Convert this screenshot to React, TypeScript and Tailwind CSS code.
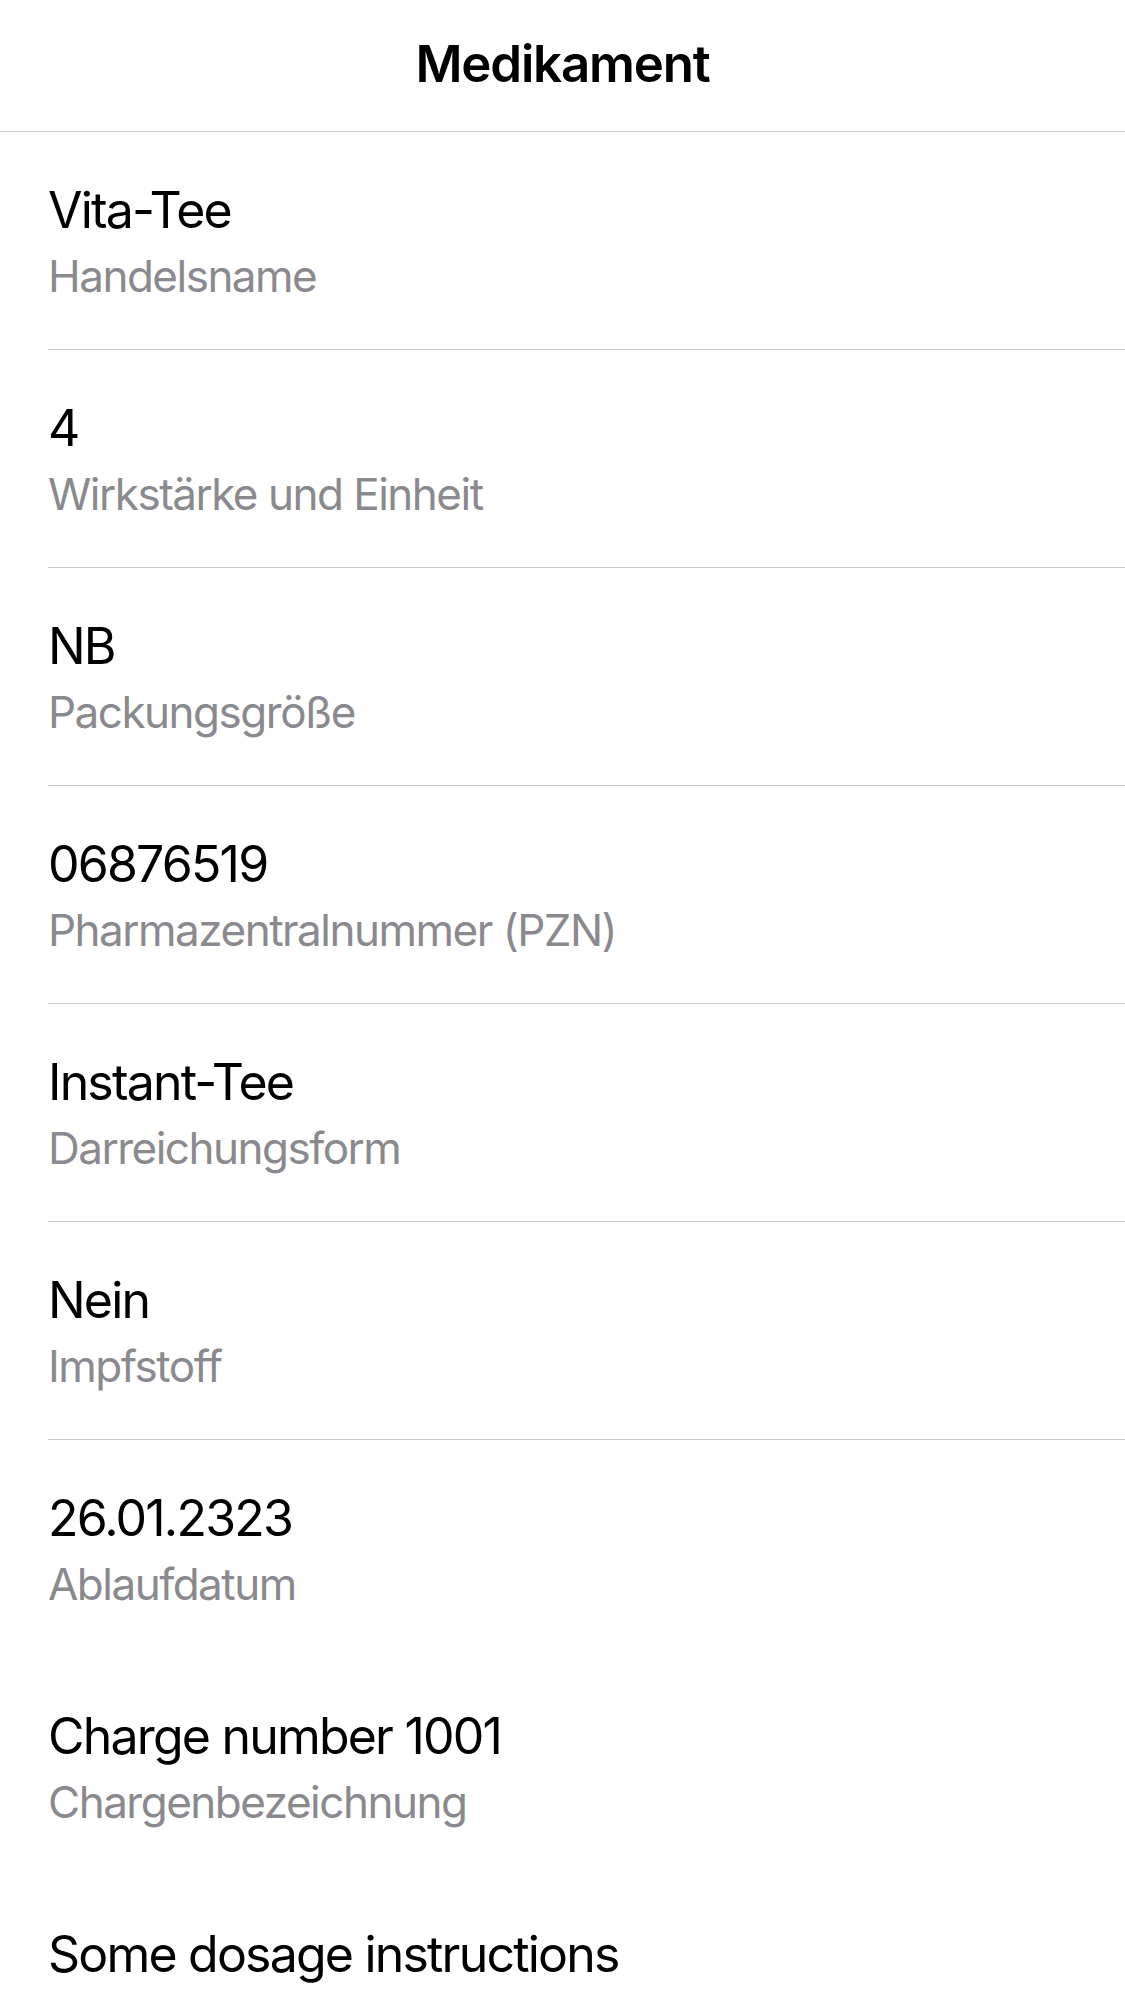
const rows = [
  { value: 'Vita-Tee', label: 'Handelsname', divider: true },
  { value: '4', label: 'Wirkstärke und Einheit', divider: true },
  { value: 'NB', label: 'Packungsgröße', divider: true },
  { value: '06876519', label: 'Pharmazentralnummer (PZN)', divider: true },
  { value: 'Instant-Tee', label: 'Darreichungsform', divider: true },
  { value: 'Nein', label: 'Impfstoff', divider: true },
  { value: '26.01.2323', label: 'Ablaufdatum', divider: false },
  { value: 'Charge number 1001', label: 'Chargenbezeichnung', divider: false },
  { value: 'Some dosage instructions', label: 'Dosierungsanweisung', divider: false },
];

const App = () => {
  return (
    <div
      className="w-[1125px] h-[2001px] overflow-hidden bg-white"
      style={{ fontFamily: 'Inter, "Noto Sans", sans-serif' }}
    >
      {/* Nav bar */}
      <header className="h-[132px] flex items-center justify-center border-b border-[#c8c8cc]">
        <h1 className="text-[51px] font-semibold text-black tracking-[-1.2px] pb-[2px]">Medikament</h1>
      </header>

      {/* List */}
      <div className="pl-[48px]">
        {rows.map((row) => (
          <div
            key={row.label}
            className={`h-[218px] pt-[45px] flex flex-col ${row.divider ? 'border-b border-[#c8c8cc]' : ''}`}
          >
            <div className="text-[50px] leading-[66px] text-black tracking-[-1.8px]">{row.value}</div>
            <div className="text-[44px] leading-[66px] text-[#8a8a8e] tracking-[-1.5px]">{row.label}</div>
          </div>
        ))}
      </div>
    </div>
  );
};

export default App;
